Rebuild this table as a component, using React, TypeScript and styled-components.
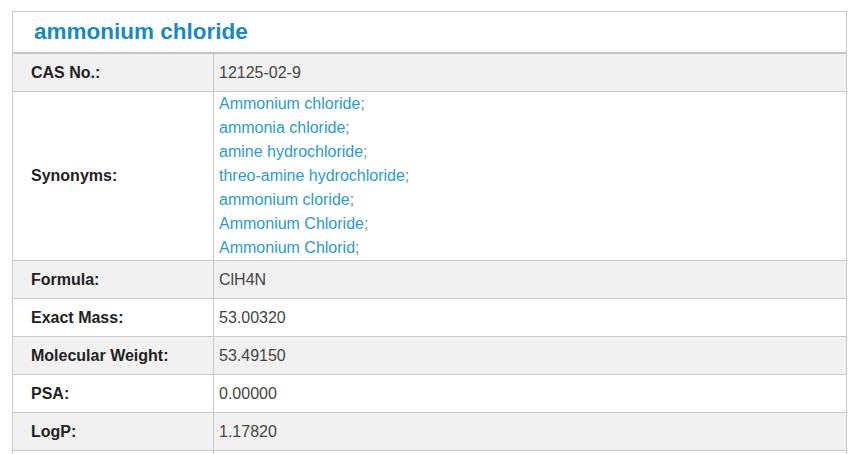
import React from "react";
import styled, { createGlobalStyle } from "styled-components";

const GlobalStyle = createGlobalStyle`
  html, body {
    margin: 0;
    padding: 0;
    background: #ffffff;
  }
  body {
    font-family: "Liberation Sans", Arial, sans-serif;
  }
`;

const Panel = styled.section`
  margin: 11px 0 0 12px;
  width: 835px;
  box-sizing: border-box;
  border: 1px solid #c8c8c8;
  border-bottom: none;
  background: #ffffff;
`;

const Title = styled.h1`
  margin: 0;
  height: 42px;
  box-sizing: border-box;
  padding: 0 0 0 21px;
  display: flex;
  align-items: center;
  font-size: 22.5px;
  font-weight: bold;
  color: #1889c2;
  border-bottom: 2px solid #c4c4c4;
`;

const Row = styled.div<{ $shaded: boolean }>`
  display: grid;
  grid-template-columns: 201px 1fr;
  background: ${(p) => (p.$shaded ? "#f1f1f1" : "#ffffff")};
  border-bottom: 1px solid #cacaca;
`;

const Label = styled.div`
  display: flex;
  align-items: center;
  min-height: 37px;
  padding-left: 18px;
  border-right: 1px solid #cacaca;
  font-size: 16px;
  font-weight: bold;
  color: #222222;
`;

const Value = styled.div`
  display: flex;
  flex-direction: column;
  justify-content: center;
  min-height: 37px;
  padding-left: 5px;
  font-size: 16px;
  line-height: 24px;
  color: #444444;
`;

const Synonym = styled.div`
  line-height: 24px;
  color: #8a8a8a;
`;

const SynonymLink = styled.a`
  color: #2a9ccc;
  text-decoration: none;
`;

const synonyms = [
  "Ammonium chloride",
  "ammonia chloride",
  "amine hydrochloride",
  "threo-amine hydrochloride",
  "ammonium cloride",
  "Ammonium Chloride",
  "Ammonium Chlorid",
];

const properties: Array<[string, string]> = [
  ["Formula:", "ClH4N"],
  ["Exact Mass:", "53.00320"],
  ["Molecular Weight:", "53.49150"],
  ["PSA:", "0.00000"],
  ["LogP:", "1.17820"],
];

export default function App() {
  return (
    <>
      <GlobalStyle />
      <Panel>
        <Title>ammonium chloride</Title>
        <Row $shaded>
          <Label>CAS No.:</Label>
          <Value>12125-02-9</Value>
        </Row>
        <Row $shaded={false}>
          <Label>Synonyms:</Label>
          <Value>
            {synonyms.map((s) => (
              <Synonym key={s}>
                <SynonymLink href="#">{s}</SynonymLink>;
              </Synonym>
            ))}
          </Value>
        </Row>
        {properties.map(([k, v], i) => (
          <Row key={k} $shaded={i % 2 === 0}>
            <Label>{k}</Label>
            <Value>{v}</Value>
          </Row>
        ))}
        <Row $shaded={false} aria-hidden="true">
          <Label />
          <Value />
        </Row>
      </Panel>
    </>
  );
}
